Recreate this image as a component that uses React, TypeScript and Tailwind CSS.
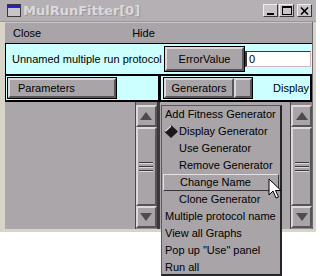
import React from "react";

const ui = { fontFamily: '"Liberation Sans", Arial, sans-serif' };

const bevel =
  "border-t-2 border-l-2 border-b-2 border-r-2 border-t-[#dcd8dc] border-l-[#dcd8dc] border-b-[#58545a] border-r-[#58545a]";

function ScrollBtn({ down }: { down?: boolean }) {
  return (
    <div className={`h-[22px] bg-[#a8a4a8] ${bevel} flex items-center justify-center`}>
      <svg width="12" height="10" viewBox="0 0 12 10">
        {down ? (
          <polygon points="0,1 12,1 6,9" fill="#4e4a4e" />
        ) : (
          <polygon points="6,1 12,9 0,9" fill="#4e4a4e" />
        )}
      </svg>
    </div>
  );
}

function Scroll() {
  return (
    <div className="w-[22px] h-full flex flex-col pt-[3px] pb-[1px] bg-[#8c888c] border-l border-[#4a464a]">
      <ScrollBtn />
      <div className={`flex-1 bg-[#a8a4a8] ${bevel} flex flex-col items-center justify-center gap-[2px]`}>
        <div className="w-[14px] h-[2px] border-t border-b border-t-[#3c383c] border-b-[#dcd8dc]" />
        <div className="w-[14px] h-[2px] border-t border-b border-t-[#3c383c] border-b-[#dcd8dc]" />
        <div className="w-[14px] h-[2px] border-t border-b border-t-[#3c383c] border-b-[#dcd8dc]" />
      </div>
      <ScrollBtn down />
    </div>
  );
}

const items: { label: string; indent?: boolean; diamond?: boolean; active?: boolean }[] = [
  { label: "Add Fitness Generator" },
  { label: "Display Generator", indent: true, diamond: true },
  { label: "Use Generator", indent: true },
  { label: "Remove Generator", indent: true },
  { label: "Change Name", indent: true, active: true },
  { label: "Clone Generator", indent: true },
  { label: "Multiple protocol name" },
  { label: "View all Graphs" },
  { label: 'Pop up "Use" panel' },
  { label: "Run all" },
];

function Menu() {
  return (
    <div
      className="absolute left-[161px] top-[105px] w-[121px] h-[171px] bg-[#a8a4a8] border-l border-t border-[#5c585c] border-r-2 border-b-2 border-r-[#262426] border-b-[#262426] flex flex-col text-[11px] text-black"
      style={ui}
    >
      {items.map((it) => (
        <div
          key={it.label}
          className={`h-[17px] shrink-0 flex items-center relative ${
            it.active
              ? "mx-[1px] border border-t-[#e4e0e4] border-l-[#e4e0e4] border-b-[#3a363a] border-r-[#3a363a] pl-[16px]"
              : it.indent
              ? "pl-[17px]"
              : "pl-[3px]"
          }`}
        >
          {it.diamond && (
            <svg className="absolute left-[2px] top-[2px]" width="14" height="13" viewBox="0 0 14 13">
              <polygon points="7,0 14,6.5 7,13 0,6.5" fill="#1a181a" />
              <polygon points="7,0 0,6.5 2,6.5 7,2" fill="#e8e4e8" />
            </svg>
          )}
          <span className="whitespace-nowrap">{it.label}</span>
        </div>
      ))}
    </div>
  );
}

function Cursor() {
  return (
    <svg className="absolute left-[268px] top-[178px]" width="14" height="22" viewBox="0 0 14 22">
      <polygon
        points="1,1 1,17 5,13 8,20 10.5,19 7.5,12.5 13,12.5"
        fill="#ffffff"
        stroke="#000000"
        strokeWidth="1"
        strokeLinejoin="miter"
      />
    </svg>
  );
}

export default function App() {
  return (
    <div className="w-[320px] h-[276px] bg-white relative overflow-hidden" style={ui}>
      <div className="w-[316px] h-[232px] flex flex-col bg-[#d8d4c8]">
        {/* title bar */}
        <div className="h-[22px] shrink-0 bg-[#b4b0b4] flex items-center pl-[7px] pr-[4px] border-b border-[#9a969a]">
          <div className="w-[14px] h-[13px] bg-[#c8c4c8] border border-[#3a363a] flex flex-col">
            <div className="h-[3px] bg-[#2020d0] border-b border-[#3a363a]" />
          </div>
          <span
            className="ml-[2px] text-[13px] font-bold text-[#dcd8dc]"
            style={{ fontFamily: '"DejaVu Sans", Verdana, sans-serif', textShadow: "1px 1px 0 #9a969a" }}
          >
            MulRunFitter[0]
          </span>
          <div className="ml-auto flex gap-[1px] items-center">
            {["min", "max"].map((k) => (
              <div key={k} className="w-[15px] h-[13px] bg-[#c8c4c8] border border-t-[#f0ecf0] border-l-[#f0ecf0] border-b-[#3a363a] border-r-[#3a363a] flex items-center justify-center">
                {k === "min" ? (
                  <div className="w-[7px] h-[2px] bg-black mt-[6px]" />
                ) : (
                  <div className="w-[10px] h-[9px] border border-black border-t-2" />
                )}
              </div>
            ))}
            <div className="ml-[2px] w-[15px] h-[13px] bg-[#c8c4c8] border border-t-[#f0ecf0] border-l-[#f0ecf0] border-b-[#3a363a] border-r-[#3a363a] flex items-center justify-center">
              <svg width="9" height="8" viewBox="0 0 9 8">
                <path d="M1,0.5 L8,7.5 M8,0.5 L1,7.5" stroke="#000" strokeWidth="1.6" />
              </svg>
            </div>
          </div>
        </div>

        <div className="flex-1 flex flex-col pl-[5px] pr-[3px] pb-[3px]">
          <div className="flex-1 flex flex-col border-r border-[#6a666a]">
            {/* menubar */}
            <div className="h-[21px] shrink-0 bg-[#a8a4a8] flex items-center text-[11px] text-black border-t border-[#c8c4c8]">
              <span className="ml-[8px]">Close</span>
              <span className="ml-[91px]">Hide</span>
            </div>

            {/* upper cyan row */}
            <div className="h-[31px] shrink-0 bg-[#ccffff] border-t border-l border-black flex items-center text-[11px] text-black">
              <span className="ml-[6px] w-[152px] whitespace-nowrap">Unnamed multiple run protocol</span>
              <div className="w-[81px] h-[26px] border border-black">
                <div className={`w-full h-full bg-[#a8a4a8] ${bevel} flex items-center justify-center`}>
                  ErrorValue
                </div>
              </div>
              <div className="w-[66px] h-[16px] bg-white border border-[#d4b4bc] border-l-2 border-l-[#3a363a] border-t-[#3a363a] flex items-center pl-[2px]">
                0
              </div>
            </div>

            {/* lower cyan row */}
            <div className="h-[28px] shrink-0 bg-[#ccffff] border-t-2 border-b-2 border-l border-black flex text-[11px] text-black">
              <div className="w-[152px] flex items-center pl-[1px]">
                <div className="w-[110px] h-[22px] border border-black">
                  <div className={`w-full h-full bg-[#a8a4a8] ${bevel} flex items-center pl-[8px]`}>Parameters</div>
                </div>
              </div>
              <div className="w-[3px] bg-black" />
              <div className="flex-1 flex items-center pl-[2px] border-r-2 border-black">
                <div className="h-[22px] flex border border-black bg-[#8c888c]">
                  <div className={`w-[70px] bg-[#a8a4a8] ${bevel} flex items-center justify-center`}>Generators</div>
                  <div className={`w-[18px] bg-[#a8a4a8] ${bevel}`} />
                </div>
                <span className="ml-[20px]">Display</span>
              </div>
            </div>

            {/* lists */}
            <div className="flex-1 flex">
              <div className="w-[130px] bg-[#aaa6aa]" />
              <Scroll />
              <div className="w-[3px] bg-[#3c383c]" />
              <div className="w-[131px] bg-[#aaa6aa]" />
              <Scroll />
            </div>
          </div>
        </div>
      </div>
      <Menu />
      <Cursor />
    </div>
  );
}
